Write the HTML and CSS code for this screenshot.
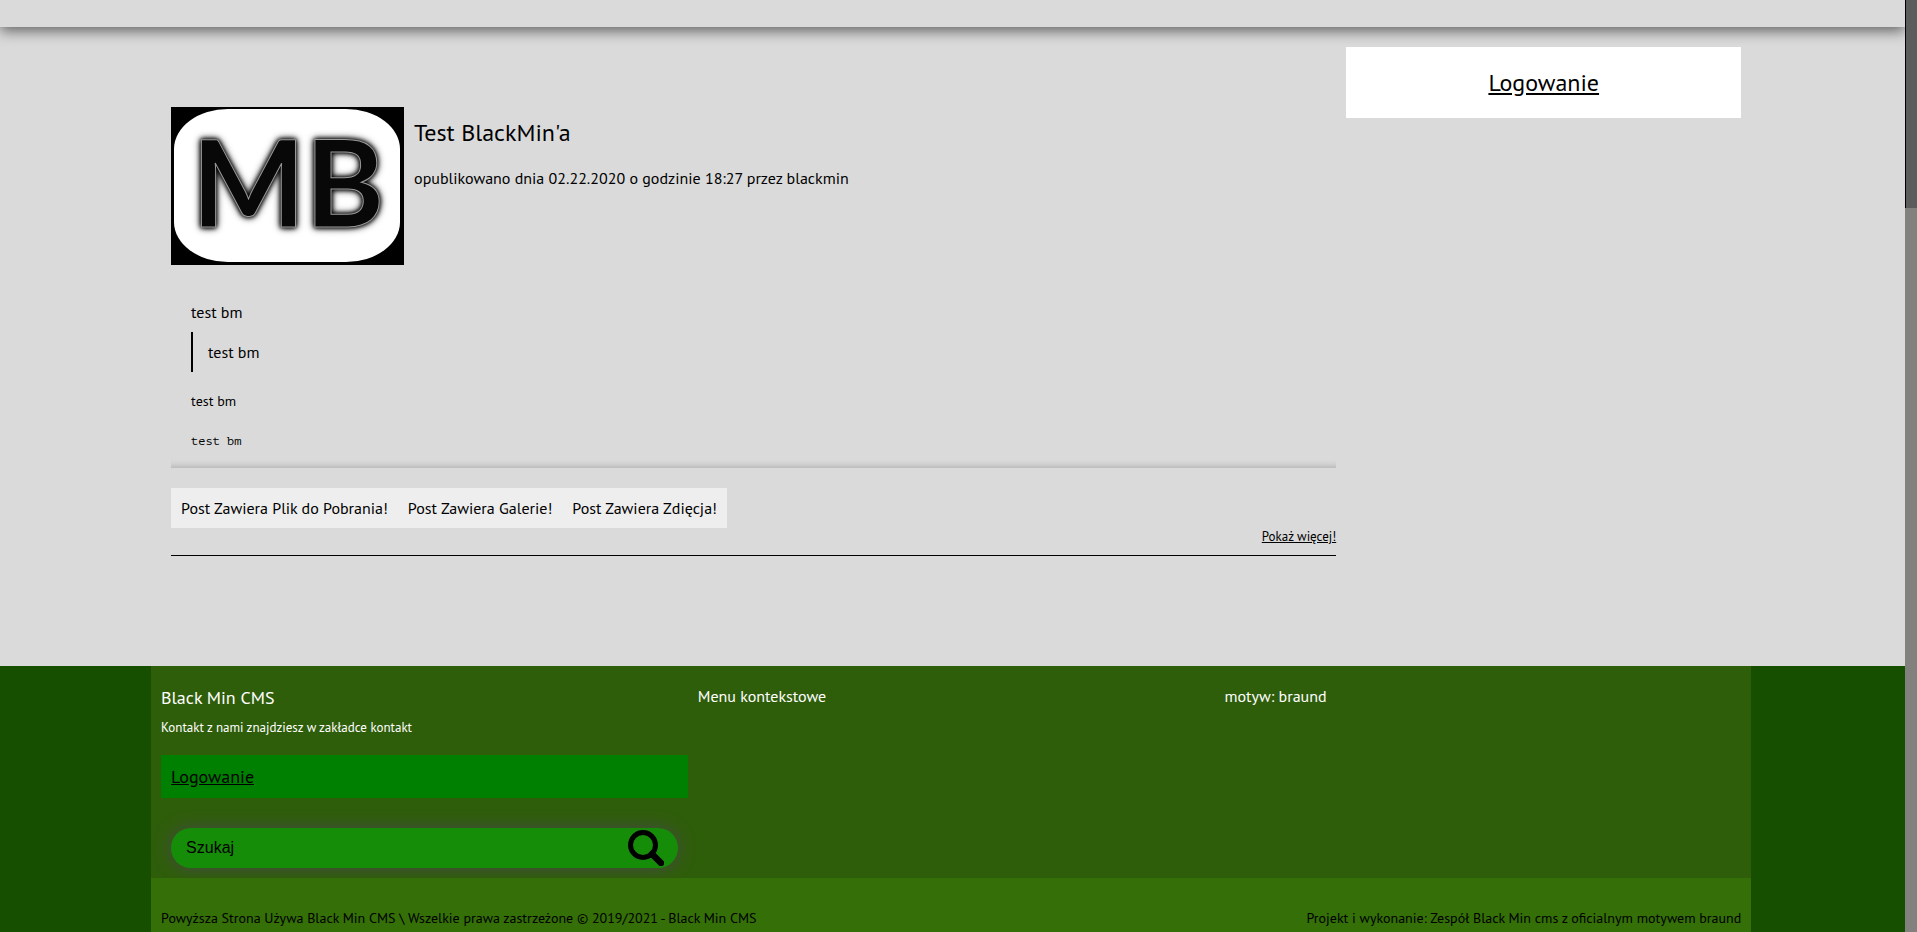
FILE: index.html
```html
<!DOCTYPE html>
<html lang="pl">
<head>
<meta charset="utf-8">
<meta name="viewport" content="width=device-width, initial-scale=1">
<title>Black Min CMS</title>
<link rel="stylesheet" href="styles.css">
</head>
<body>
<div class="window">
  <div class="page">
    <header class="topbar"></header>
    <div class="content wrap">
      <main class="posts">
        <article class="post">
          <div class="post-head">
            <svg class="post-image" viewBox="0 0 233 158" role="img" aria-label="Logo MB">
              <rect width="233" height="158" fill="#000"/>
              <rect x="3" y="2" width="226" height="153" rx="54" ry="40" fill="#fff"/>
              <text class="logo-letters" x="117" y="120" text-anchor="middle">MB</text>
            </svg>
            <div class="post-info">
              <h2 class="post-title">Test BlackMin'a</h2>
              <p class="post-meta">opublikowano dnia 02.22.2020 o godzinie 18:27 przez blackmin</p>
            </div>
          </div>
          <div class="post-body">
            <p>test bm</p>
            <blockquote class="quote">test bm</blockquote>
            <p class="small">test bm</p>
            <pre class="code">test bm</pre>
          </div>
          <div class="tags">
            <span>Post Zawiera Plik do Pobrania!</span>
            <span>Post Zawiera Galerie!</span>
            <span>Post Zawiera Zdięcja!</span>
          </div>
          <a class="more" href="#">Pokaż więcej!</a>
        </article>
      </main>
      <aside class="sidebar">
        <div class="login-card"><a href="#">Logowanie</a></div>
      </aside>
    </div>
    <footer class="footer">
      <div class="footer-inner wrap">
        <div class="columns">
          <section class="column">
            <h3 class="brand">Black Min CMS</h3>
            <p class="contact">Kontakt z nami znajdziesz w zakładce kontakt</p>
            <a class="footer-login" href="#">Logowanie</a>
            <form class="search">
              <input type="text" placeholder="Szukaj" aria-label="Szukaj">
              <button type="submit" aria-label="Szukaj">
                <svg viewBox="0 0 36 36" aria-hidden="true"><circle cx="15" cy="15" r="12.5" fill="none" stroke="#000" stroke-width="5"/><path d="M24 24 33 33" stroke="#000" stroke-width="6.5" stroke-linecap="round"/></svg>
              </button>
            </form>
          </section>
          <section class="column"><h4>Menu kontekstowe</h4></section>
          <section class="column"><h4>motyw: braund</h4></section>
        </div>
        <div class="legal">
          <span>Powyższa Strona Używa Black Min CMS \ Wszelkie prawa zastrzeżone © 2019/2021 - Black Min CMS</span>
          <span>Projekt i wykonanie: Zespół Black Min cms z oficialnym motywem braund</span>
        </div>
      </div>
    </footer>
  </div>
  <div class="scrollbar" aria-hidden="true"><div class="thumb"></div></div>
</div>
</body>
</html>
```
FILE: styles.css
```css
* { box-sizing: border-box; }
body {
  margin: 0;
  background: #dadada;
  color: #000;
  font-family: "PT Sans", Lato, sans-serif;
  font-size: 16px;
  line-height: 20px;
}
h2, h3, h4, p, pre, blockquote { margin: 0; font-weight: 400; }
a { color: inherit; }

.window { display: flex; height: 100vh; overflow: hidden; }
.page { flex: 1; display: flex; flex-direction: column; min-width: 0; }
.scrollbar { width: 12px; background: #82817e; }
.thumb { height: 208px; background: #5c5c5c; border-left: 1px solid #000; }

.topbar {
  flex: none;
  height: 27px;
  box-shadow: 0 4px 14px rgba(0, 0, 0, 0.55);
}
.wrap { width: 84%; margin: 0 8% 0 7.93%; }
.content { flex: none; display: flex; padding: 20px 10px 110px; }
.posts { width: 75%; padding: 60px 10px 0; }
.sidebar { width: 25%; }

.post { display: flex; flex-direction: column; align-items: flex-start; border-bottom: 1px solid #000; padding-bottom: 10px; }
.post-head { display: flex; gap: 10px; }
.post-image { width: 233px; height: 158px; }
.logo-letters {
  font: 700 120px Lato, sans-serif;
  fill: #080808;
  stroke: #999;
  stroke-width: 1px;
  filter: drop-shadow(0 0 2px #000) drop-shadow(0 0 3px #000);
}
.post-title { margin-top: 10px; font-size: 24px; line-height: 32px; }
.post-meta { margin-top: 19px; }

.post-body {
  width: 100%;
  margin-top: 22px;
  padding: 15px 20px 17px;
  box-shadow: inset 0 -8px 7px -7px rgba(0, 0, 0, 0.22);
}
.quote { margin: 10px 0 19px; padding: 10px 15px; border-left: 2px solid #000; }
.small { font-size: 14px; }
.code { margin-top: 20px; font: 12px/20px "PT Mono", "DejaVu Sans Mono", monospace; }

.tags { display: flex; gap: 20px; margin-top: 20px; padding: 10px; background: #eee; }
.more { align-self: flex-end; margin-top: 1px; font-size: 13px; line-height: 16px; }

.login-card {
  padding: 20px;
  background: #fff;
  text-align: center;
  font-size: 24px;
  line-height: 31px;
}

.footer { flex: 1; background: #164f00; }
.footer-inner { height: 100%; display: flex; flex-direction: column; background: #346f07; }
.columns { display: grid; grid-template-columns: repeat(3, 1fr); padding: 20px 10px 10px; background: #2f5e0b; }
.column { color: #fff; }
.column + .column { padding-left: 10px; }
.brand { font-size: 18px; line-height: 24px; }
.contact { margin-top: 8px; font-size: 13px; line-height: 20px; }
.footer-login {
  display: block;
  margin-top: 17px;
  padding: 10px;
  background: #008000;
  color: #000;
  font-size: 18px;
  line-height: 23px;
}
.search {
  display: flex;
  align-items: center;
  height: 40px;
  margin: 30px 10px 0;
  padding: 0 14px 0 15px;
  border-radius: 20px;
  background: #158d09;
  box-shadow: 0 0 16px #484848;
}
.search input { flex: 1; min-width: 0; padding: 0; border: 0; outline: 0; background: none; font: 16px "Liberation Sans", Arial, sans-serif; }
.search input::placeholder { color: #000; opacity: 1; }
.search button { display: flex; padding: 0; border: 0; background: none; }
.search svg { width: 36px; height: 36px; }
.legal { position: relative; flex: 1; display: flex; justify-content: space-between; padding: 30px 10px 0; background: #346f07; font-size: 14px; }
```
